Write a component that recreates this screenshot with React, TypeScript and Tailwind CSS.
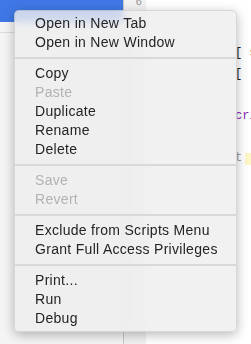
type Item = { label: string; disabled?: boolean } | 'sep';

const ITEMS: Item[] = [
  { label: 'Open in New Tab' },
  { label: 'Open in New Window' },
  'sep',
  { label: 'Copy' },
  { label: 'Paste', disabled: true },
  { label: 'Duplicate' },
  { label: 'Rename' },
  { label: 'Delete' },
  'sep',
  { label: 'Save', disabled: true },
  { label: 'Revert', disabled: true },
  'sep',
  { label: 'Exclude from Scripts Menu' },
  { label: 'Grant Full Access Privileges' },
  'sep',
  { label: 'Print...' },
  { label: 'Run' },
  { label: 'Debug' },
];

function ContextMenu() {
  return (
    <div className="absolute left-[14px] top-[10px] w-[223px] rounded-[5px] border border-black/10 bg-[#eeeeee]/80 py-[3px] shadow-[0_3px_12px_rgba(0,0,0,0.28)] backdrop-blur-[4px]">
      {ITEMS.map((item, i) =>
        item === 'sep' ? (
          <div key={i} className="flex h-[12px] items-center">
            <div className="h-[2px] w-full bg-[#d9d9d9]" />
          </div>
        ) : (
          <div
            key={i}
            className={
              'flex h-[19px] items-center pl-[20px] text-[14px] tracking-[0.3px] ' +
              (item.disabled ? 'text-[#b2b2b2]' : 'text-[#242424]')
            }
          >
            {item.label}
          </div>
        ),
      )}
    </div>
  );
}

export default function App() {
  return (
    <div
      className="relative flex h-[344px] w-[251px] overflow-hidden bg-white"
      style={{ fontFamily: '"Liberation Sans", Arial, sans-serif' }}
    >
      {/* sidebar */}
      <div className="w-[124px] shrink-0 border-r border-[#c9c9c9] bg-[#f5f5f5]">
        <div className="h-[22px] bg-[#3f78e6]" />
        <div className="h-[10px]" />
        <div className="h-px bg-[#dcdcdc]" />
      </div>

      {/* gutter */}
      <div className="w-[22px] shrink-0 bg-[#f2f2f2] pr-[4px] text-right font-['Liberation_Mono',monospace] text-[11px] leading-none text-[#9a9a9a]">
        <div className="-mt-[3px]">6</div>
      </div>

      {/* editor */}
      <div className="flex-1 whitespace-pre pl-[89px] pt-[43px] font-['Liberation_Mono',monospace] text-[12px] leading-[21px] text-[#222]">
        <div>[ s</div>
        <div>[</div>
        <div> </div>
        <div className="text-[#8a2db8]">cri</div>
        <div> </div>
        <div className="flex items-center">
          <span className="text-[#9a9a9a]">t</span>
          <span className="ml-[3px] h-[12px] w-[6px] bg-[#fdf7c8]" />
        </div>
      </div>

      <ContextMenu />
    </div>
  );
}
